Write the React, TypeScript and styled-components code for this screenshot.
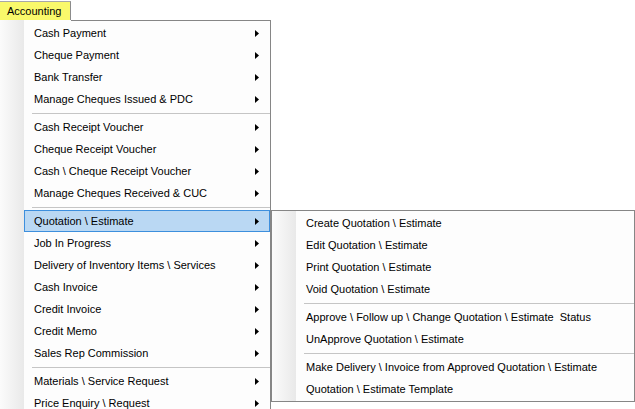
import React from "react";
import styled, { createGlobalStyle } from "styled-components";

const Global = createGlobalStyle`
  html, body { margin: 0; padding: 0; background: #ffffff; }
  body { overflow: hidden; width: 635px; height: 409px; font-family: "Liberation Sans", Arial, sans-serif; }
`;

const Page = styled.div`
  position: relative;
  width: 635px;
  height: 409px;
  overflow: hidden;
  background: #ffffff;
  font-family: "Liberation Sans", Arial, sans-serif;
  font-size: 11px;
  color: #000;
`;

const MenuBar = styled.div`
  display: flex;
  padding-top: 1px;
  height: 19px;
`;

const BarButton = styled.div`
  box-sizing: border-box;
  width: 71px;
  height: 19px;
  display: flex;
  align-items: center;
  padding-left: 7px;
  background: #f9f96b;
  border-top: 1px solid #a8a8a8;
  border-right: 1px solid #8c8c8c;
  font-size: 11px;
`;

const Menu = styled.div<{ $left: number; $top: number; $width: number; $open?: boolean }>`
  position: absolute;
  left: ${(p) => p.$left}px;
  top: ${(p) => p.$top}px;
  box-sizing: border-box;
  width: ${(p) => p.$width}px;
  border: 1px solid #868686;
  border-top: ${(p) => (p.$open ? "none" : "1px solid #868686")};
  padding: ${(p) => (p.$open ? "2px 0 1px" : "1px 0")};
  background: linear-gradient(to right, #fbfbfb, #e9e9e9) 0 0 / 24px 100% no-repeat, #fdfdfd;
  &::before {
    content: "";
    display: ${(p) => (p.$open ? "block" : "none")};
    position: absolute;
    top: 0;
    left: 71px;
    right: 0;
    height: 1px;
    background: #868686;
  }
`;

const Item = styled.div<{ $active?: boolean }>`
  box-sizing: border-box;
  height: 22px;
  margin-left: 24px;
  display: flex;
  align-items: center;
  justify-content: space-between;
  padding: 0 10px 0 10px;
  border: 1px solid ${(p) => (p.$active ? "#3d8fdd" : "transparent")};
  background: ${(p) => (p.$active ? "#bad8f3" : "transparent")};
  white-space: pre;
  padding-left: 9px;
`;

const Separator = styled.div`
  height: 6px;
  margin-left: 32px;
  display: flex;
  align-items: center;
  &::after {
    content: "";
    display: block;
    flex: 1;
    height: 1px;
    background: #c5c5c5;
  }
`;

const Arrow = () => (
  <svg width="4" height="7" viewBox="0 0 4 7">
    <polygon points="0,0 4,3.5 0,7" fill="#000" />
  </svg>
);

type Entry = { label: string; sub?: boolean; active?: boolean } | "sep";

const mainItems: Entry[] = [
  { label: "Cash Payment", sub: true },
  { label: "Cheque Payment", sub: true },
  { label: "Bank Transfer", sub: true },
  { label: "Manage Cheques Issued & PDC", sub: true },
  "sep",
  { label: "Cash Receipt Voucher", sub: true },
  { label: "Cheque Receipt Voucher", sub: true },
  { label: "Cash \\ Cheque Receipt Voucher", sub: true },
  { label: "Manage Cheques Received & CUC", sub: true },
  "sep",
  { label: "Quotation \\ Estimate", sub: true, active: true },
  { label: "Job In Progress", sub: true },
  { label: "Delivery of Inventory Items \\ Services", sub: true },
  { label: "Cash Invoice", sub: true },
  { label: "Credit Invoice", sub: true },
  { label: "Credit Memo", sub: true },
  { label: "Sales Rep Commission", sub: true },
  "sep",
  { label: "Materials \\ Service Request", sub: true },
  { label: "Price Enquiry \\ Request", sub: true },
];

const subItems: Entry[] = [
  { label: "Create Quotation \\ Estimate" },
  { label: "Edit Quotation \\ Estimate" },
  { label: "Print Quotation \\ Estimate" },
  { label: "Void Quotation \\ Estimate" },
  "sep",
  { label: "Approve \\ Follow up \\ Change Quotation \\ Estimate  Status" },
  { label: "UnApprove Quotation \\ Estimate" },
  "sep",
  { label: "Make Delivery \\ Invoice from Approved Quotation \\ Estimate" },
  { label: "Quotation \\ Estimate Template" },
];

const renderEntries = (entries: Entry[]) =>
  entries.map((e, i) =>
    e === "sep" ? (
      <Separator key={i} />
    ) : (
      <Item key={i} $active={e.active}>
        <span>{e.label}</span>
        {e.sub && <Arrow />}
      </Item>
    )
  );

export default function App() {
  return (
    <Page>
      <Global />
      <MenuBar>
        <BarButton>Accounting</BarButton>
      </MenuBar>
      <Menu $left={-1} $top={20} $width={272} $open>
        {renderEntries(mainItems)}
      </Menu>
      <Menu $left={271} $top={210} $width={364}>
        {renderEntries(subItems)}
      </Menu>
    </Page>
  );
}
